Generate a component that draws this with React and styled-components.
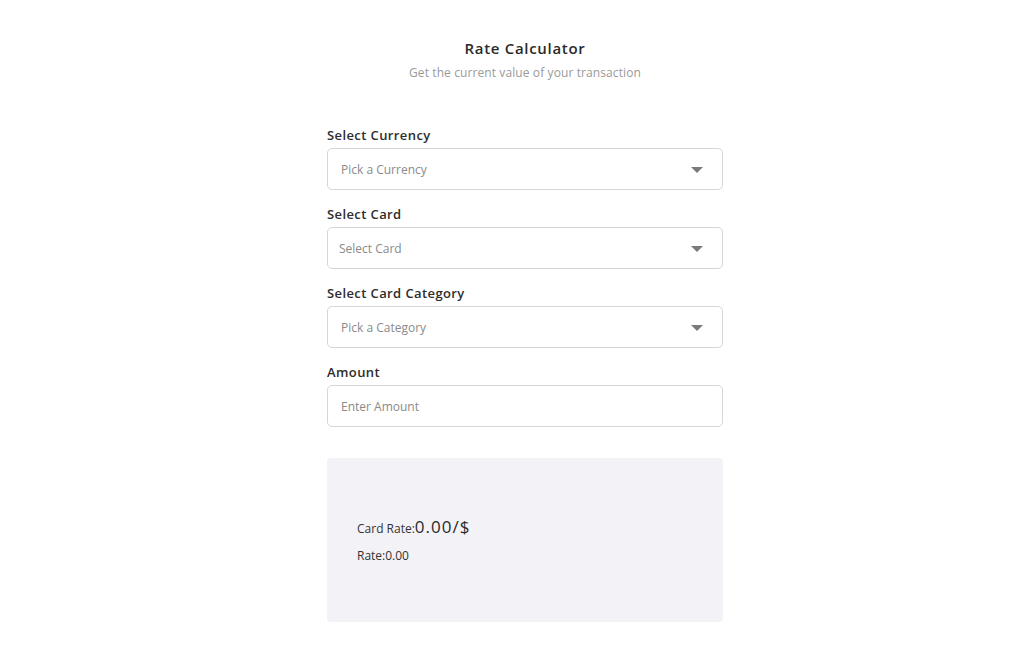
import React from "react";
import styled, { createGlobalStyle } from "styled-components";

const GlobalStyle = createGlobalStyle`
  body {
    margin: 0;
    background: #ffffff;
    font-family: "Open Sans", "Lato", sans-serif;
    color: #2b2b2b;
  }
`;

const Page = styled.div`
  display: flex;
  flex-direction: column;
  align-items: center;
  padding-top: 39px;
`;

const Header = styled.div`
  display: flex;
  flex-direction: column;
  align-items: center;
  margin-left: 26px;
  .title {
    margin: 0;
    font-size: 15px;
    font-weight: 600;
    letter-spacing: 0.7px;
    color: #2a2a2a;
    line-height: 18px;
  }
  .subtitle {
    margin: 8px 0 0;
    font-size: 12px;
    letter-spacing: 0.1px;
    color: #9a9a9a;
    line-height: 16px;
  }
`;

const Form = styled.div`
  width: 396px;
  margin-left: 26px;
  margin-top: 46px;
  display: flex;
  flex-direction: column;
`;

const Field = styled.div`
  display: flex;
  flex-direction: column;
  margin-bottom: 16px;
`;

const Label = styled.label`
  font-size: 13px;
  font-weight: 600;
  letter-spacing: 0.4px;
  color: #2d2d2d;
  line-height: 16px;
  margin-bottom: 5px;
`;

const Box = styled.div`
  height: 42px;
  box-sizing: border-box;
  border: 1px solid #d6d6d6;
  border-radius: 5px;
  display: flex;
  align-items: center;
  justify-content: space-between;
  padding: 0 19px 0 ${(p) => p.$indent || 13}px;
  font-size: 12px;
  color: #8a8a8a;
`;

const Arrow = styled.span`
  width: 0;
  height: 0;
  border-left: 6px solid transparent;
  border-right: 6px solid transparent;
  border-top: 6px solid #7a7a7a;
  margin-top: 1px;
`;

const Result = styled.div`
  margin-top: 15px;
  height: 164px;
  background: #f3f2f7;
  border-radius: 4px;
  display: flex;
  flex-direction: column;
  justify-content: center;
  padding-left: 30px;
  box-sizing: border-box;
  font-size: 12px;
  color: #333;
  .rate {
    display: flex;
    align-items: baseline;
    line-height: 20px;
  }
  .rate strong {
    font-size: 17px;
    font-weight: 500;
    letter-spacing: 1px;
    color: #2a2a2a;
  }
  .small {
    margin-top: 9px;
    line-height: 16px;
  }
`;

const fields = [
  { label: "Select Currency", placeholder: "Pick a Currency", select: true },
  { label: "Select Card", placeholder: "Select Card", select: true, indent: 11 },
  { label: "Select Card Category", placeholder: "Pick a Category", select: true },
  { label: "Amount", placeholder: "Enter Amount" },
];

const App = () => {
  return (
    <>
      <GlobalStyle />
      <Page>
        <Header>
          <h1 className="title">Rate Calculator</h1>
          <p className="subtitle">Get the current value of your transaction</p>
        </Header>
        <Form>
          {fields.map((f) => (
            <Field key={f.label}>
              <Label>{f.label}</Label>
              <Box $indent={f.indent}>
                <span>{f.placeholder}</span>
                {f.select && <Arrow />}
              </Box>
            </Field>
          ))}
          <Result>
            <div className="rate">
              Card Rate:<strong>0.00/$</strong>
            </div>
            <div className="small">Rate:0.00</div>
          </Result>
        </Form>
      </Page>
    </>
  );
};

export default App;
